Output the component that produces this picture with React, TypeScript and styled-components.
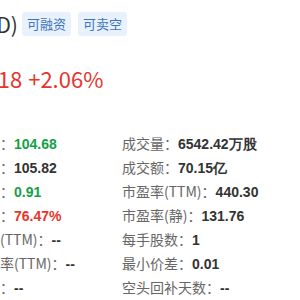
import React from "react";
import styled, { createGlobalStyle } from "styled-components";

const GlobalStyle = createGlobalStyle`
  html, body {
    margin: 0;
    padding: 0;
    background: #fff;
    overflow: hidden;
  }
  body {
    font-family: "Noto Sans CJK SC", "Noto Sans", sans-serif;
    color: #333;
  }
`;

// the screenshot is a crop of a wider quote page, so the page hangs off the left edge
const Page = styled.div`
  margin-left: -56px;
  padding-top: 12px;
  width: 420px;
`;

const Header = styled.div`
  display: flex;
  align-items: center;
  height: 24px;
`;

const Title = styled.h1`
  margin: 0 4px 0 0;
  font-size: 21px;
  font-weight: 400;
  line-height: 24px;
  color: #333;
  white-space: nowrap;
`;

const Tag = styled.span`
  display: inline-block;
  height: 24px;
  line-height: 24px;
  padding: 0 5px;
  margin-right: 7px;
  border-radius: 3px;
  background: #e9f2fc;
  color: #3b74c0;
  font-size: 13px;
`;

const PriceRow = styled.div<{ $up?: boolean }>`
  display: flex;
  gap: 6px;
  margin-top: 26px;
  padding-left: 11px;
  font-size: 22px;
  line-height: 32px;
  color: ${(p) => (p.$up ? "#e8352c" : "#14a046")};
`;

const Grid = styled.div`
  display: grid;
  grid-template-columns: 178px 1fr;
  margin-top: 37px;
`;

const Cell = styled.div`
  display: flex;
  align-items: baseline;
  height: 24px;
  line-height: 24px;
  font-size: 14px;
  white-space: nowrap;
`;

const Label = styled.span`
  color: #666;
`;

type Tone = "up" | "down" | "flat";

const Value = styled.span<{ $tone: Tone }>`
  font-family: "Liberation Sans", Arial, sans-serif;
  font-weight: 700;
  color: ${(p) =>
    p.$tone === "up" ? "#e8352c" : p.$tone === "down" ? "#14a046" : "#333"};
`;

const rows: [string, string, Tone][] = [
  ["今日开盘", "104.68", "down"],
  ["成交量", "6542.42万股", "flat"],
  ["昨日收盘", "105.82", "flat"],
  ["成交额", "70.15亿", "flat"],
  ["涨跌金额", "0.91", "down"],
  ["市盈率(TTM)", "440.30", "flat"],
  ["日内换手", "76.47%", "up"],
  ["市盈率(静)", "131.76", "flat"],
  ["每股收益(TTM)", "--", "flat"],
  ["每手股数", "1", "flat"],
  ["股息收益率(TTM)", "--", "flat"],
  ["最小价差", "0.01", "flat"],
  ["卖空比例", "--", "flat"],
  ["空头回补天数", "--", "flat"],
];

export default function App() {
  return (
    <>
      <GlobalStyle />
      <Page>
        <Header>
          <Title>(CRWD)</Title>
          <Tag>可融资</Tag>
          <Tag>可卖空</Tag>
        </Header>
        <PriceRow $up>
          <span>107.18</span>
          <span>+2.06%</span>
        </PriceRow>
        <Grid>
          {rows.map(([label, value, tone]) => (
            <Cell key={label}>
              <Label>{label}：</Label>
              <Value $tone={tone}>{value}</Value>
            </Cell>
          ))}
        </Grid>
      </Page>
    </>
  );
}
